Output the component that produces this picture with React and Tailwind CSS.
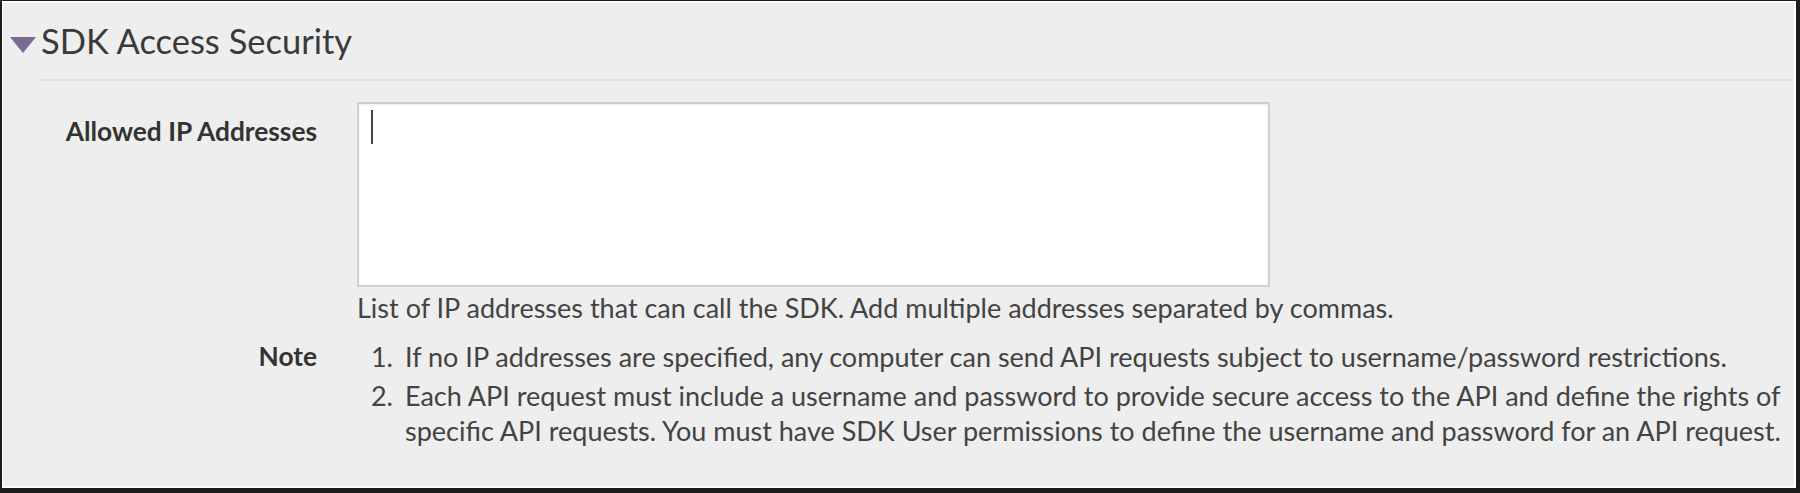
import React from 'react'

const font = { fontFamily: 'Lato, "Open Sans", sans-serif' }

function Caret() {
  return <span className="absolute left-[12px] top-[6px] h-[34px] w-[2px] bg-[#444]" />
}

export default function App() {
  return (
    <div className="w-[1800px] h-[493px] bg-[#1c1c1c] pt-px pl-[2px] pr-[4px] pb-[5px]" style={font}>
      <div className="h-full border-t-2 border-l border-r-2 border-b-2 border-white bg-[#eeeeee] flex flex-col">
        {/* section header */}
        <div className="flex items-center h-[76px] pl-[7px]">
          <svg width="26" height="17" viewBox="0 0 26 17" className="mt-[9px]">
            <polygon points="0,0 26,0 13,16" fill="#7a6a94" />
          </svg>
          <h2 className="ml-[5px] text-[34.5px] leading-none text-[#3a3a3a]">SDK Access Security</h2>
        </div>
        <div className="ml-[37px] h-[2px] bg-[#e0e0e0]" />

        {/* form */}
        <div className="grid grid-cols-[314px_1fr] gap-x-[40px] mt-[21px] text-[27px] leading-[35px] text-[#434343]">
          <div className="text-right font-bold text-[26.3px] leading-[35px] text-[#333] pt-[12px]">Allowed IP Addresses</div>
          <div>
            <div className="relative w-[913px] h-[185px] bg-white border-2 border-[#cfcfcf] shadow-[inset_0_1px_2px_rgba(0,0,0,0.08)]">
              <Caret />
            </div>
            <p className="mt-[3px] leading-[35px]">List of IP addresses that can call the SDK. Add multiple addresses separated by commas.</p>
          </div>

          <div className="text-right font-bold text-[26.3px] leading-[35px] text-[#333] mt-[14px]">Note</div>
          <div className="mt-[14px] pl-[12px] mr-[-6px] flex flex-col gap-[4px]">
            <div className="flex gap-[12px] leading-[35px]">
              <span className="w-[24px] shrink-0 text-right leading-[35px]">1.</span>
              <span className="leading-[35px]">If no IP addresses are specified, any computer can send API requests subject to username/password restrictions.</span>
            </div>
            <div className="flex gap-[12px] leading-[35px]">
              <span className="w-[24px] shrink-0 text-right leading-[35px]">2.</span>
              <span className="leading-[35px]">Each API request must include a username and password to provide secure access to the API and define the rights of specific API requests. You must have SDK User permissions to define the username and password for an API request.</span>
            </div>
          </div>
        </div>
      </div>
    </div>
  )
}
